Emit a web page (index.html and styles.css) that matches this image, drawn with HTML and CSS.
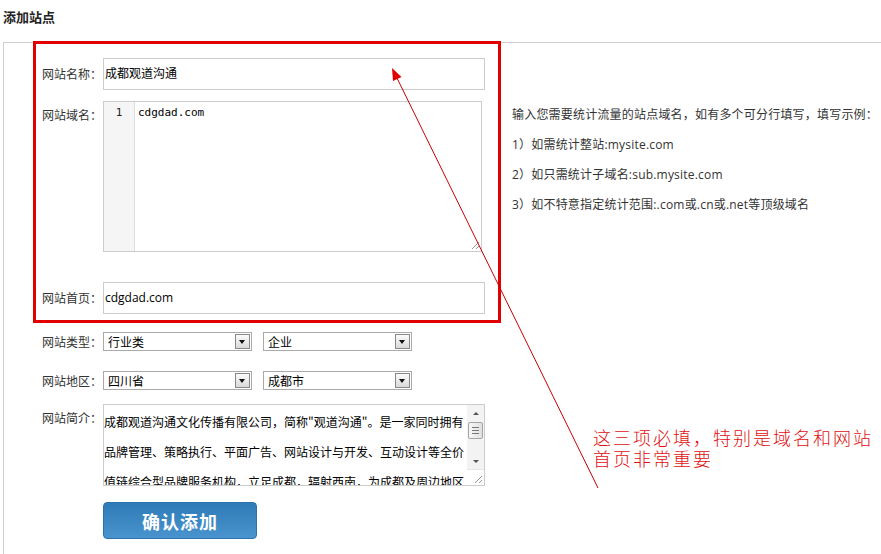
FILE: index.html
```html
<!DOCTYPE html>
<html lang="zh-CN">
<head>
<meta charset="utf-8">
<title>添加站点</title>
<link rel="stylesheet" href="styles.css">
</head>
<body>
<div class="page">
  <h2 class="title">添加站点</h2>
  <div class="panel">
    <div class="form">
      <div class="required">
        <div class="row">
          <span class="label">网站名称：</span>
          <div class="input">成都观道沟通</div>
        </div>
        <div class="row row-top domain-row">
          <span class="label">网站域名：</span>
          <div class="editor">
            <div class="gutter">1</div>
            <div class="code">cdgdad.com</div>
            <svg class="grip" width="9" height="9" viewBox="0 0 9 9"><path d="M1 8 L8 1 M5 8 L8 5" stroke="#9a9a9a" stroke-width="1" fill="none"/></svg>
          </div>
        </div>
        <div class="row home">
          <span class="label">网站首页：</span>
          <div class="input">cdgdad.com</div>
        </div>
      </div>
      <div class="row sel-row">
        <span class="label">网站类型：</span>
        <div class="select"><span>行业类</span><i class="arrow"></i></div>
        <div class="select"><span>企业</span><i class="arrow"></i></div>
      </div>
      <div class="row sel-row sel-row2">
        <span class="label">网站地区：</span>
        <div class="select"><span>四川省</span><i class="arrow"></i></div>
        <div class="select"><span>成都市</span><i class="arrow"></i></div>
      </div>
      <div class="row row-top intro-row">
        <span class="label">网站简介：</span>
        <div class="textarea">
          <div class="ta-text">成都观道沟通文化传播有限公司，简称"观道沟通"。是一家同时拥有<br>品牌管理、策略执行、平面广告、网站设计与开发、互动设计等全价<br>值链综合型品牌服务机构，立足成都，辐射西南，为成都及周边地区</div>
          <div class="scrollbar">
            <div class="sb-btn"><i class="tri-up"></i></div>
            <div class="sb-thumb"><i></i><i></i><i></i></div>
            <div class="sb-track"></div>
            <div class="sb-btn"><i class="tri-down"></i></div>
            <div class="sb-corner">
              <svg width="9" height="9" viewBox="0 0 9 9"><path d="M1 8 L8 1 M5 8 L8 5" stroke="#9a9a9a" stroke-width="1" fill="none"/></svg>
            </div>
          </div>
        </div>
      </div>
      <div class="btn-row"><button class="btn" type="button">确认添加</button></div>
    </div>
    <div class="help">
      <p>输入您需要统计流量的站点域名，如有多个可分行填写，填写示例：</p>
      <p>1）如需统计整站:mysite.com</p>
      <p>2）如只需统计子域名:sub.mysite.com</p>
      <p>3）如不特意指定统计范围:.com或.cn或.net等顶级域名</p>
    </div>
  </div>
  <svg class="annot-arrow" width="881" height="554" viewBox="0 0 881 554">
    <line x1="598" y1="488" x2="396" y2="76" stroke="#c80000" stroke-width="1"/>
    <polygon points="392,68 393,81 401.5,77" fill="#e00000"/>
  </svg>
  <div class="annot-text">这三项必填，特别是域名和网站<br>首页非常重要</div>
</div>
</body>
</html>
```

FILE: styles.css
```css
* { box-sizing: border-box; }
html, body { margin: 0; padding: 0; background: #fff; }
body {
  font-family: "Open Sans", "Noto Sans CJK SC", sans-serif;
  font-size: 12px;
  color: #333;
}
.page { position: relative; width: 881px; height: 554px; overflow: hidden; }

.title {
  margin: 0;
  height: 42px;
  padding: 7px 0 0 3px;
  font-family: "Noto Sans CJK SC", sans-serif;
  font-size: 13px;
  font-weight: bold;
  line-height: 20px;
  color: #222;
}

.panel {
  margin-left: 3px;
  height: 600px;
  border-top: 1px solid #cfcfcf;
  border-left: 1px solid #cfcfcf;
  display: flex;
}
.form { margin-left: 29px; width: 468px; flex: none; }
.required {
  margin-top: -2px;
  border: 3px solid #e00000;
  padding: 14px 13px 6px 6px;
}
.row { display: flex; align-items: center; }
.row-top { align-items: flex-start; }
.label {
  width: 61px;
  flex: none;
  font-family: "Noto Sans CJK SC", sans-serif;
  font-size: 12px;
  line-height: 28px;
  color: #333;
  white-space: nowrap;
}
.input {
  width: 382px;
  height: 32px;
  border: 1px solid #ccc;
  padding: 0 1px;
  line-height: 30px;
  font-size: 12px;
  color: #000;
  white-space: nowrap;
}
.domain-row { margin-top: 11px; }
.editor {
  position: relative;
  width: 379px;
  height: 151px;
  border: 1px solid #ccc;
  display: flex;
}
.gutter {
  width: 31px;
  flex: none;
  background: #f5f5f5;
  border-right: 1px solid #ddd;
  text-align: center;
  font-family: "DejaVu Sans Mono", monospace;
  font-size: 11px;
  line-height: 22px;
  color: #222;
}
.code {
  padding-left: 3px;
  font-family: "DejaVu Sans Mono", monospace;
  font-size: 11px;
  line-height: 22px;
  color: #000;
}
.grip { position: absolute; right: 1px; bottom: 1px; }
.home { margin-top: 30px; }

.sel-row { margin: 9px 0 0 9px; }
.sel-row2 { margin-top: 20px; }
.sel-row .label { line-height: 19px; }
.select {
  width: 149px;
  height: 19px;
  margin-right: 11px;
  border: 1px solid #aaa;
  padding: 0 1px 0 4px;
  display: flex;
  align-items: center;
  justify-content: space-between;
  font-family: "Noto Sans CJK SC", sans-serif;
  font-size: 12px;
  color: #000;
  background: #fff;
}
.arrow {
  position: relative;
  width: 15px;
  height: 15px;
  border: 1px solid #888;
  background: linear-gradient(#fbfbfb, #d9d9d9);
}
.arrow::after {
  content: "";
  position: absolute;
  left: 3px;
  top: 5px;
  border-left: 3.5px solid transparent;
  border-right: 3.5px solid transparent;
  border-top: 4px solid #111;
}

.intro-row { margin: 14px 0 0 9px; }
.textarea {
  width: 382px;
  height: 82px;
  border: 1px solid #ccc;
  display: flex;
  overflow: hidden;
}
.ta-text {
  flex: 1;
  overflow: hidden;
  white-space: nowrap;
  padding-top: 2px;
  font-family: "Noto Sans CJK SC", sans-serif;
  font-size: 12px;
  line-height: 30px;
  color: #000;
}
.scrollbar {
  width: 17px;
  flex: none;
  display: flex;
  flex-direction: column;
  background: #f3f3f3;
}
.sb-btn {
  height: 16px;
  flex: none;
  display: flex;
  align-items: center;
  justify-content: center;
}
.tri-up {
  border-left: 3px solid transparent;
  border-right: 3px solid transparent;
  border-bottom: 3px solid #555;
}
.tri-down {
  border-left: 3px solid transparent;
  border-right: 3px solid transparent;
  border-top: 3px solid #555;
}
.sb-thumb {
  height: 17px;
  margin: 1px 1px 0 1px;
  border: 1px solid #a5a5a5;
  border-radius: 2px;
  background: linear-gradient(90deg, #f7f7f7, #e0e0e0);
  display: flex;
  flex-direction: column;
  align-items: center;
  justify-content: center;
  gap: 2px;
}
.sb-thumb i { width: 7px; height: 1px; background: #777; }
.sb-track { flex: 1; }
.sb-corner {
  height: 16px;
  flex: none;
  background: #fff;
  border-top: 1px solid #e6e6e6;
  display: flex;
  align-items: flex-end;
  justify-content: flex-end;
  padding: 0 1px 1px 0;
}

.btn-row { margin: 16px 0 0 70px; }
.btn {
  width: 154px;
  height: 37px;
  border: 1px solid #2d73ab;
  border-radius: 4px;
  background: linear-gradient(#2f7bb7, #4994ce);
  color: #fff;
  font-family: "Noto Sans CJK SC", sans-serif;
  font-size: 18px;
  font-weight: bold;
  letter-spacing: 1px;
  padding: 0;
}

.help {
  margin-left: 11px;
  padding-top: 57px;
  font-size: 12px;
  line-height: 30px;
  color: #333;
  letter-spacing: 0.2px;
  white-space: nowrap;
}
.help p { margin: 0; }

.annot-arrow { position: absolute; left: 0; top: 0; pointer-events: none; }
.annot-text {
  position: absolute;
  left: 593px;
  top: 427px;
  font-family: "Noto Sans CJK SC", sans-serif;
  font-weight: 300;
  font-size: 18px;
  letter-spacing: 2px;
  line-height: 21px;
  color: #e01010;
  white-space: nowrap;
}
```
